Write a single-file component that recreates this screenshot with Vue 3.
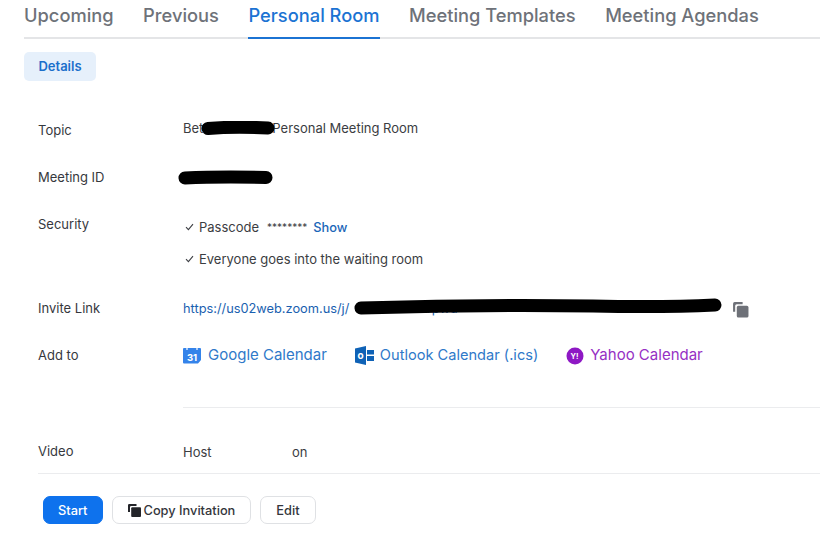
<template>
  <div class="page">
    <nav class="tabs">
      <a v-for="tab in tabs" :key="tab" class="tab" :class="{ active: tab === 'Personal Room' }">{{ tab }}</a>
    </nav>
    <div class="pill">Details</div>

    <section class="details">
      <div class="row row-topic">
        <div class="label">Topic</div>
        <div class="value topic">
          <span>Bet</span><span class="room-name">Personal Meeting Room</span>
          <svg class="scribble-name" width="74" height="15" viewBox="0 0 74 15">
            <path d="M7 7.5C24 6 48 6 67 7" stroke="#000" stroke-width="13" stroke-linecap="round" fill="none" />
          </svg>
        </div>
      </div>

      <div class="row row-id">
        <div class="label">Meeting ID</div>
        <div class="value id-value">
          <svg width="95" height="15" viewBox="0 0 95 15">
            <path d="M7 8C30 7 65 7 88 7.5" stroke="#000" stroke-width="13" stroke-linecap="round" fill="none" />
          </svg>
        </div>
      </div>

      <div class="row row-security">
        <div class="label">Security</div>
        <div class="value">
          <div class="check-line passcode">
            <svg class="check" width="9" height="8" viewBox="0 0 9 8">
              <path d="M1 4.2 3.4 6.6 8 1.2" stroke="#3d3f44" stroke-width="1.1" fill="none" />
            </svg>
            <span>Passcode</span>
            <span class="stars">********</span>
            <a class="show">Show</a>
          </div>
          <div class="check-line everyone">
            <svg class="check" width="9" height="8" viewBox="0 0 9 8">
              <path d="M1 4.2 3.4 6.6 8 1.2" stroke="#3d3f44" stroke-width="1.1" fill="none" />
            </svg>
            <span>Everyone goes into the waiting room</span>
          </div>
        </div>
      </div>

      <div class="row row-invite">
        <div class="label">Invite Link</div>
        <div class="value invite">
          <a class="link">https://us02web.zoom.us/j/<span class="link-rest">?pwd=</span></a>
          <svg class="scribble-link" width="370" height="20" viewBox="0 0 370 20">
            <path d="M8 11C90 8.5 170 8 240 9C290 10 330 9.5 362 8" stroke="#000" stroke-width="13" stroke-linecap="round" fill="none" />
          </svg>
          <svg class="copy-icon" width="17" height="17" viewBox="0 0 16 16">
            <path d="M1 2.5A1.5 1.5 0 0 1 2.5 1H10v2H4.5A1.5 1.5 0 0 0 3 4.5V10H1Z" fill="#6e7178" />
            <rect x="4.5" y="4.5" width="11" height="11" rx="1.5" fill="#6e7178" />
          </svg>
        </div>
      </div>

      <div class="row row-add">
        <div class="label">Add to</div>
        <div class="value calendars">
          <a class="cal google">
            <svg width="18" height="17" viewBox="0 0 18 17">
              <path d="M0 2A1 1 0 0 1 1 1H17a1 1 0 0 1 1 1V13L15 16.5H1a1 1 0 0 1-1-1Z" fill="#3483ea" />
              <path d="M4 0v3M14 0v3" stroke="#fff" stroke-width="1.2" />
              <text x="9" y="14" class="cal-num">31</text>
            </svg>
            Google Calendar
          </a>
          <a class="cal outlook">
            <svg width="19" height="19" viewBox="0 0 19 19">
              <path d="M0 2.5 11 0V19L0 16.5Z" fill="#0f62b6" />
              <rect x="12" y="4" width="7" height="4.5" fill="#0f62b6" />
              <rect x="12" y="10" width="7" height="5" fill="#0f62b6" />
              <text x="5.5" y="13" class="cal-o">o</text>
            </svg>
            Outlook Calendar (.ics)
          </a>
          <a class="cal yahoo">
            <svg width="18" height="18" viewBox="0 0 18 18">
              <circle cx="9" cy="9" r="8.5" fill="#8e18c4" />
              <text x="8.5" y="12" class="cal-y">Y!</text>
            </svg>
            Yahoo Calendar
          </a>
        </div>
      </div>

      <div class="inner-rule"></div>

      <div class="row row-video">
        <div class="label">Video</div>
        <div class="value video">
          <span class="host">Host</span>
          <span>on</span>
        </div>
      </div>
    </section>

    <div class="actions">
      <button class="btn primary">Start</button>
      <button class="btn copy">
        <svg width="13" height="13" viewBox="0 0 13 13">
          <path d="M0 1.2A1.2 1.2 0 0 1 1.2 0H8.5v2H3.2A1.2 1.2 0 0 0 2 3.2V8H0Z" fill="#232429" />
          <rect x="3.2" y="3.2" width="9.8" height="9.8" rx="1" fill="#232429" />
        </svg>
        Copy Invitation
      </button>
      <button class="btn edit">Edit</button>
    </div>
  </div>
</template>

<script setup>
const tabs = ["Upcoming", "Previous", "Personal Room", "Meeting Templates", "Meeting Agendas"];
</script>

<style>
body {
  background: #fff;
}
</style>

<style scoped>
.page {
  width: 839px;
  height: 534px;
  overflow: hidden;
  box-sizing: border-box;
  padding: 0 19px 0 24px;
  font-family: Inter, "Liberation Sans", sans-serif;
  color: #3b3d42;
  font-size: 13px;
}

.tabs {
  display: flex;
  gap: 29.5px;
  height: 39px;
  border-bottom: 2px solid #e4e5e7;
  box-sizing: border-box;
}
.tab {
  height: 39px;
  box-sizing: border-box;
  padding-top: 3px;
  font-size: 18.3px;
  line-height: 24px;
  font-weight: 500;
  color: #6e7279;
}
.tab.active {
  color: #1b73d3;
  border-bottom: 2px solid #1b73d3;
}

.pill {
  width: 72px;
  height: 29px;
  margin-top: 13px;
  border-radius: 5px;
  background: #e6f0fb;
  color: #1b6fcb;
  font-size: 13px;
  font-weight: 600;
  line-height: 29px;
  text-align: center;
}

.details {
  padding-left: 14px;
}
.row {
  display: grid;
  grid-template-columns: 145px 1fr;
  line-height: 18px;
}
.label {
  color: #36383d;
}
.value {
  color: #3b3d42;
}

.row-topic {
  margin-top: 40px;
}
.topic {
  position: relative;
  margin-top: -2px;
  height: 18px;
}
.room-name {
  margin-left: 69px;
}
.scribble-name {
  position: absolute;
  left: 18px;
  top: 2px;
}

.row-id {
  margin-top: 29px;
}
.id-value {
  display: flex;
  align-items: center;
  margin-left: -5px;
}

.row-security {
  margin-top: 29px;
}
.check-line {
  display: flex;
  align-items: center;
  gap: 5px;
  padding-left: 2px;
}
.passcode {
  margin-top: 2px;
}
.stars {
  margin-left: 3px;
  font-size: 10px;
}
.show {
  margin-left: 1px;
  margin-top: 2px;
  color: #1a66b8;
  font-size: 12.8px;
  font-weight: 500;
}
.everyone {
  margin-top: 13px;
}

.row-invite {
  margin-top: 31px;
}
.invite {
  position: relative;
  height: 18px;
}
.link {
  color: #1a5fb0;
  font-size: 12.8px;
}
.link-rest {
  margin-left: 76px;
}
.scribble-link {
  position: absolute;
  left: 170px;
  top: -2px;
}
.copy-icon {
  position: absolute;
  left: 549px;
  top: 2px;
}

.row-add {
  margin-top: 29px;
}
.calendars {
  display: flex;
  gap: 28px;
  margin-top: -2px;
  font-size: 15px;
}
.cal {
  display: flex;
  align-items: center;
  gap: 7px;
}
.outlook {
  gap: 6px;
  font-size: 14.6px;
}
.yahoo {
  gap: 6px;
  color: #9630c4;
}
.cal svg {
  margin-top: 2px;
}
.google,
.outlook {
  color: #2f79c9;
}
.cal-num {
  font-size: 9.5px;
  font-weight: 700;
  fill: #fff;
  text-anchor: middle;
}
.cal-o {
  font-size: 10px;
  font-weight: 700;
  fill: #fff;
  text-anchor: middle;
}
.cal-y {
  font-size: 7.5px;
  font-weight: 700;
  fill: #fff;
  text-anchor: middle;
}

.inner-rule {
  height: 1px;
  margin: 42px 0 0 145px;
  background: #ebecee;
}

.row-video {
  margin-top: 34px;
}
.video {
  display: flex;
  margin-top: 1px;
}
.host {
  width: 109px;
}

.actions {
  display: flex;
  align-items: center;
  gap: 9.5px;
  margin: 12px 0 0 14px;
  padding: 22px 0 0 5px;
  border-top: 1px solid #ebecee;
}
.btn {
  height: 28px;
  padding: 0 15px;
  border: 1px solid #dfe1e4;
  border-radius: 7px;
  background: #fff;
  color: #34363b;
  font-family: inherit;
  font-size: 12.8px;
  font-weight: 500;
  display: flex;
  align-items: center;
  gap: 3px;
}
.primary {
  width: 59.5px;
  padding: 0;
  justify-content: center;
  background: #0e72ed;
  border-color: #0e72ed;
  color: #fff;
}
.copy {
  padding: 0 14.5px;
}
.edit {
  padding: 0 15px;
}
</style>
